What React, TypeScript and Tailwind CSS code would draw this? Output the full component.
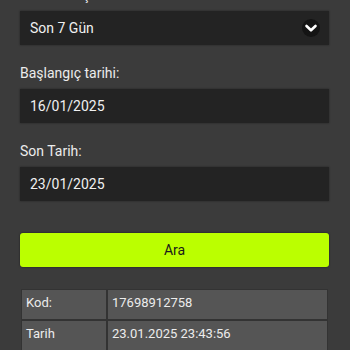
import React from "react";

/* Date range filter form with result table, dark theme. */

const font = { fontFamily: "Roboto, 'Noto Sans', sans-serif" };

function Field({ label, children }: { label: string; children: React.ReactNode }) {
  return (
    <div className="mb-[18px] flex flex-col">
      <label className="mb-1.5 text-[14px] leading-5 text-[#ececec]">{label}</label>
      {children}
    </div>
  );
}

function ChevronCircle() {
  return (
    <svg width="20" height="20" viewBox="0 0 20 20" aria-hidden="true">
      <circle cx="10" cy="10" r="9" fill="#141414" />
      <path d="M5.5 8 L10 12.3 L14.5 8" fill="none" stroke="#fff" strokeWidth="2.6" strokeLinecap="round" strokeLinejoin="round" />
    </svg>
  );
}

const rows = [
  { key: "Kod:", value: "17698912758" },
  { key: "Tarih", value: "23.01.2025 23:43:56" },
];

export default function App() {
  return (
    <div className="h-[350px] w-[350px] overflow-hidden bg-[#3b3b3b]" style={font}>
      <div className="-mt-[15px] flex flex-col pl-5 pr-[21px]">
        <Field label="Dönem seçimi:">
          <div className="flex h-[34px] items-center justify-between bg-[#232323] pl-2.5 pr-2 text-[14px] text-[#f0f0f0] shadow-[0_0_2px_rgba(0,0,0,0.4)]">
            <span>Son 7 Gün</span>
            <ChevronCircle />
          </div>
        </Field>
        <Field label="Başlangıç tarihi:">
          <div className="flex h-[34px] items-center bg-[#232323] pl-2.5 text-[14px] text-[#f0f0f0] shadow-[0_0_2px_rgba(0,0,0,0.4)]">
            16/01/2025
          </div>
        </Field>
        <Field label="Son Tarih:">
          <div className="flex h-[34px] items-center bg-[#232323] pl-2.5 text-[14px] text-[#f0f0f0] shadow-[0_0_2px_rgba(0,0,0,0.4)]">
            23/01/2025
          </div>
        </Field>

        <button className="mt-[14px] flex h-[34px] w-full items-center justify-center rounded-[3px] bg-[#bbff00] text-[14px] text-[#1a1a1a] shadow-[0_0_2px_rgba(0,0,0,0.6)]">
          Ara
        </button>

        <div className="mx-px mt-[22px] grid grid-cols-[84px_1fr] gap-[2px] bg-[#333333] p-px">
          {rows.map((r) => (
            <React.Fragment key={r.key}>
              <div className="h-[29px] bg-[#555555] pl-1 pt-[3px] text-[13px] leading-5 text-[#ececec]">{r.key}</div>
              <div className="h-[29px] bg-[#555555] pl-1 pt-[3px] text-[13px] leading-5 text-[#ececec]">{r.value}</div>
            </React.Fragment>
          ))}
        </div>
      </div>
    </div>
  );
}
